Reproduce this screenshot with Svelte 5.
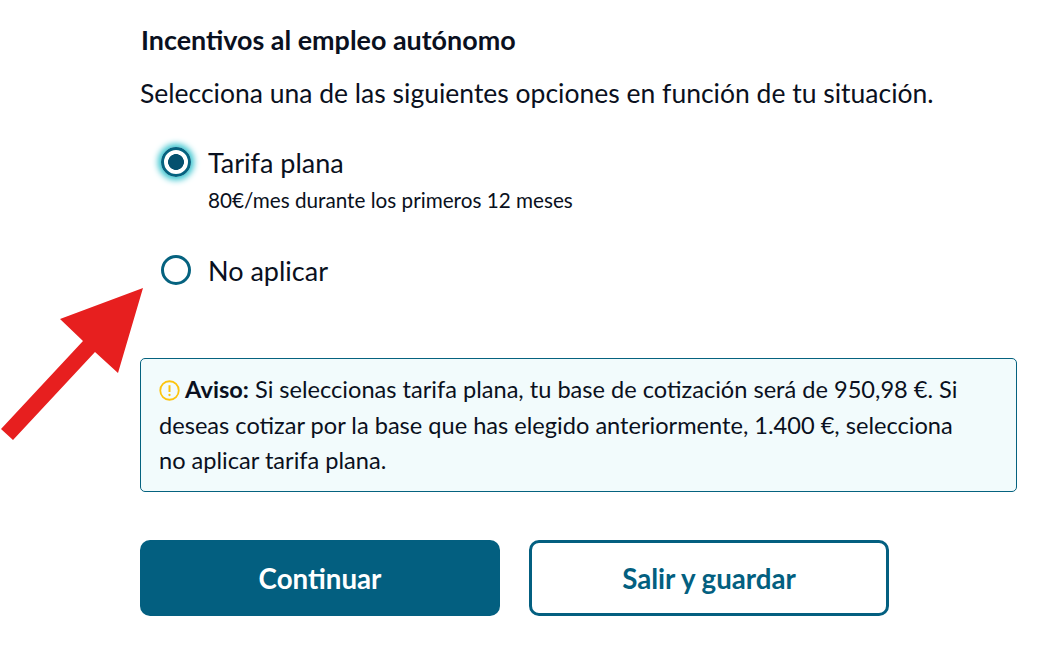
<script>
  let choice = $state('tarifa');
</script>

<main class="page">
  <h2 class="title">Incentivos al empleo autónomo</h2>
  <p class="lead">Selecciona una de las siguientes opciones en función de tu situación.</p>

  <div class="options">
    <label class="option first">
      <input type="radio" name="tarifa" value="tarifa" bind:group={choice} />
      <span class="radio" class:on={choice === 'tarifa'}></span>
      <span class="text">
        <span class="name">Tarifa plana</span>
        <span class="hint">80€/mes durante los primeros 12 meses</span>
      </span>
    </label>
    <label class="option second">
      <input type="radio" name="tarifa" value="no" bind:group={choice} />
      <span class="radio"></span>
      <span class="text"><span class="name">No aplicar</span></span>
    </label>
  </div>

  <div class="notice">
    <svg class="warn" viewBox="0 0 20 20" aria-hidden="true">
      <circle cx="10" cy="10" r="8.8" fill="none" stroke="#fcc40d" stroke-width="1.7" />
      <path d="M10 5v6.4" stroke="#fcc40d" stroke-width="1.9" fill="none" />
      <circle cx="10" cy="14.3" r="1.1" fill="#fcc40d" />
    </svg>
    <b>Aviso:</b> Si seleccionas tarifa plana, tu base de cotización será de 950,98 €. Si deseas cotizar por la base que has elegido anteriormente, 1.400 €, selecciona no aplicar tarifa plana.
  </div>

  <div class="actions">
    <button class="btn primary">Continuar</button>
    <button class="btn secondary">Salir y guardar</button>
  </div>

  <svg class="arrow" viewBox="0 0 150 450" aria-hidden="true">
    <polygon points="143,288 60,319 83,341 1,429 13,440 95,352 118,373" fill="#e71f1f" />
  </svg>
</main>

<style>
  :global(body) {
    margin: 0;
    background: #fff;
  }
  .page {
    position: relative;
    box-sizing: border-box;
    width: 1043px;
    height: 669px;
    padding: 25px 26px 0 140px;
    font-family: Lato, "Open Sans", sans-serif;
    color: #0a1020;
    overflow: hidden;
  }
  .title {
    margin: 0 0 0 1px;
    font-size: 26.9px;
    line-height: 30px;
    font-weight: 700;
  }
  .lead {
    margin: 20px 0 0;
    font-size: 26.5px;
    line-height: 36px;
    font-weight: 400;
  }
  .options {
    display: flex;
    flex-direction: column;
    margin-top: 36px;
    padding-left: 21px;
  }
  .option {
    display: flex;
    align-items: flex-start;
    gap: 17px;
    position: relative;
  }
  .option.second {
    margin-top: 42px;
  }
  .option input {
    position: absolute;
    opacity: 0;
    width: 30px;
    height: 30px;
    margin: 0;
  }
  .radio {
    box-sizing: border-box;
    flex: none;
    width: 30px;
    height: 30px;
    border: 3px solid #05627f;
    border-radius: 50%;
    background: #fff;
  }
  .radio.on {
    background: radial-gradient(circle, #05506e 0 7.6px, #fff 8.2px);
    box-shadow: 0 0 6px 3px #35c3ce;
  }
  .text {
    display: flex;
    flex-direction: column;
  }
  .name {
    font-size: 27px;
    line-height: 34px;
    margin-top: -1px;
  }
  .hint {
    margin-top: 7px;
    font-size: 20.7px;
    line-height: 26px;
  }
  .notice {
    box-sizing: border-box;
    width: 877px;
    height: 134px;
    margin-top: 70px;
    padding: 13px 45px 13px 18px;
    border: 1px solid #05627f;
    border-radius: 5px;
    background: #f2fbfc;
    font-size: 23.6px;
    line-height: 35.5px;
  }
  .warn {
    width: 21px;
    height: 21px;
    margin-right: -1px;
    vertical-align: -3px;
  }
  .notice b {
    font-weight: 700;
  }
  .actions {
    display: flex;
    gap: 29px;
    margin-top: 48px;
  }
  .btn {
    box-sizing: border-box;
    width: 360px;
    height: 76px;
    border-radius: 10px;
    font-family: inherit;
    font-size: 27.7px;
    font-weight: 700;
    cursor: pointer;
  }
  .primary {
    border: 0;
    background: #035f80;
    color: #fff;
  }
  .secondary {
    border: 3px solid #035f80;
    background: #fff;
    color: #035f80;
  }
  .arrow {
    position: absolute;
    left: 0;
    top: 0;
    width: 150px;
    height: 450px;
    pointer-events: none;
  }
</style>
